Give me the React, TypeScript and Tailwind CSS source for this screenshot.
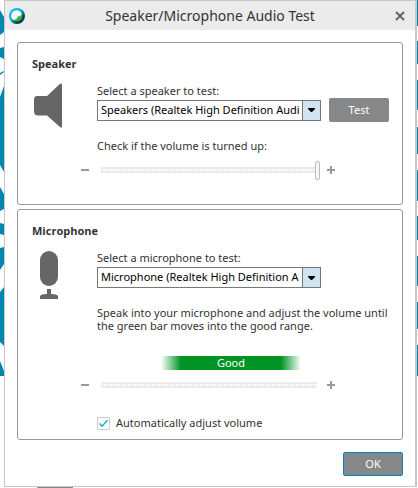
import { useState } from 'react'
import type { ReactNode } from 'react'

function Logo() {
  return (
    <svg width="16" height="16" viewBox="0 0 16 16" aria-hidden="true">
      <defs>
        <linearGradient id="ring" x1="0.1" y1="0.1" x2="0.8" y2="0.9">
          <stop offset="0.4" stopColor="#00bceb" />
          <stop offset="0.65" stopColor="#00708f" />
          <stop offset="0.8" stopColor="#07405f" />
        </linearGradient>
      </defs>
      <circle cx="8" cy="8" r="8" fill="url(#ring)" />
      <circle cx="7.8" cy="7.8" r="5.6" fill="#2fb344" />
      <path d="M12.8 5.4A5.6 5.6 0 1 0 3.8 11.8C6.6 12 8.2 10.6 8.8 8.4C10.4 8.4 12.4 7.4 12.8 5.4Z" fill="#fff" />
    </svg>
  )
}

function SpeakerIcon() {
  return (
    <svg width="30" height="45" viewBox="0 0 30 45" className="fill-[#666666]" aria-hidden="true">
      <path d="M5 13H15L27.5 1.2Q29.5 0 30 1V44Q29.5 45 28 44L15 32.5H6Q2 32.5 2 28V17Q2 13 5 13Z" />
    </svg>
  )
}

function MicIcon() {
  return (
    <svg width="30" height="49" viewBox="0 0 30 49" className="fill-[#666666]" aria-hidden="true">
      <rect x="8" y="1" width="18" height="35" rx="9" />
      <path d="M15 39H19V44Q25 44 26 46V49H8V46Q9 44 15 44Z" />
    </svg>
  )
}

function Backdrop({ side }: { side: 'left' | 'right' }) {
  if (side === 'left') {
    return (
      <svg width="4" height="376" viewBox="0 0 4 376" className="fill-[#0087b0]" aria-hidden="true">
        <path d="M0 10L4 17V32L0 35ZM0 48L4 47V59L0 57ZM0 73L4 71V72L0 75ZM0 97L4 86V172L0 165ZM0 187L4 194V209L0 211ZM0 223L4 224V235L0 234ZM0 248L4 247V264L0 270ZM0 292L4 287V346L0 342ZM0 361L4 371V376H0Z" />
      </svg>
    )
  }
  return (
    <svg width="1" height="376" viewBox="0 0 1 376" className="fill-[#0087b0]" aria-hidden="true">
      <path d="M0 0H1V26H0ZM0 41H1V64H0ZM0 80H1V110H0ZM0 127H1V154H0ZM0 170H1V201H0ZM0 216H1V240H0ZM0 256H1V286H0ZM0 302H1V329H0ZM0 345H1V376H0Z" />
    </svg>
  )
}

function Panel({ title, icon, children }: { title: string; icon: ReactNode; children: ReactNode }) {
  return (
    <section className="rounded-[3px] border border-[#999999] pt-3.5 pr-1.5 pl-3.5">
      <h2 className="font-['Open_Sans',sans-serif] text-[11px] leading-[14px] font-bold">{title}</h2>
      <div className="mt-3 flex">
        <div className="w-[65px] shrink-0">{icon}</div>
        <div className="min-w-0 flex-1">{children}</div>
      </div>
    </section>
  )
}

function DeviceSelect({ id, device }: { id: string; device: string }) {
  return (
    <div className="relative h-[21px] w-56 shrink-0">
      <select
        id={id}
        className="block h-full w-full appearance-none border border-[#777777] bg-white pr-[18px] pl-[3px] text-[11px] text-black outline-none"
      >
        <option>{device}</option>
      </select>
      <span className="pointer-events-none absolute inset-y-0 right-0 flex w-[19px] items-center justify-center border border-[#777777] bg-[#d0e3f1]">
        <svg width="7" height="4" viewBox="0 0 7 4" aria-hidden="true">
          <path d="M0 0H7V1L4 4H3L0 1Z" />
        </svg>
      </span>
    </div>
  )
}

const rangeClass =
  'block h-5 appearance-none bg-transparent outline-none ' +
  '[&::-webkit-slider-runnable-track]:h-1.5 [&::-webkit-slider-runnable-track]:border-2 [&::-webkit-slider-runnable-track]:border-r-0 [&::-webkit-slider-runnable-track]:border-[#ebebeb] ' +
  '[&::-webkit-slider-runnable-track]:bg-[repeating-linear-gradient(90deg,#f8f8f8_0_5px,#ebebeb_5px_6px)] ' +
  '[&::-webkit-slider-thumb]:-mt-2 [&::-webkit-slider-thumb]:h-[19px] [&::-webkit-slider-thumb]:w-[5px] [&::-webkit-slider-thumb]:appearance-none [&::-webkit-slider-thumb]:rounded-[2px] [&::-webkit-slider-thumb]:border [&::-webkit-slider-thumb]:border-[#bbbbbb] [&::-webkit-slider-thumb]:bg-[#f6f6f6]'

function VolumeSlider({ label, value, onChange, thumb }: { label: string; value: number; onChange: (v: number) => void; thumb: boolean }) {
  return (
    <div className="-ml-4 flex h-5 items-center">
      <button type="button" aria-label="Decrease" className="mr-3" onClick={() => onChange(Math.max(0, value - 10))}>
        <svg width="8" height="8" viewBox="0 0 8 8" className="block fill-[#999999]" aria-hidden="true">
          <path d="M0 3H8V5H0Z" />
        </svg>
      </button>
      <div className="w-[219px]">
        <input
          type="range"
          aria-label={label}
          min={0}
          max={100}
          value={value}
          onChange={(e) => onChange(Number(e.target.value))}
          className={`${rangeClass} ${thumb ? 'w-[219px]' : 'w-[216px] [&::-webkit-slider-thumb]:invisible'}`}
        />
      </div>
      <button type="button" aria-label="Increase" className="ml-[7px]" onClick={() => onChange(Math.min(100, value + 10))}>
        <svg width="8" height="8" viewBox="0 0 8 8" className="block fill-[#999999]" aria-hidden="true">
          <path d="M0 3H3V0H5V3H8V5H5V8H3V5H0Z" />
        </svg>
      </button>
    </div>
  )
}

export default function App() {
  const [speakerVolume, setSpeakerVolume] = useState(100)
  const [micVolume, setMicVolume] = useState(0)
  const [auto, setAuto] = useState(true)

  return (
    <div className="bg-white font-['Noto_Sans',sans-serif] text-[11px] text-[#333333]">
      <div className="flex items-start">
        <Backdrop side="left" />
        <main className="min-w-0 flex-1 border border-r-2 border-[#c8c8c8] bg-white">
          <header className="flex h-[29px] items-center bg-[#ebebeb] pr-2.5 pl-1">
            <Logo />
            <h1 className="flex-1 text-center text-[14px] leading-5">Speaker/Microphone Audio Test</h1>
            <button type="button" aria-label="Close">
              <svg width="10" height="10" viewBox="0 0 10 10" className="stroke-[#666666] stroke-2" aria-hidden="true">
                <path d="M1 1L9 9M9 1L1 9" />
              </svg>
            </button>
          </header>

          <div className="flex flex-col gap-1 px-3 pt-3">
            <Panel title="Speaker" icon={<SpeakerIcon />}>
              <label htmlFor="speaker" className="block leading-[15px]">Select a speaker to test:</label>
              <div className="flex items-center gap-2">
                <DeviceSelect id="speaker" device="Speakers (Realtek High Definition Audi" />
                <button type="button" className="h-6 w-[60px] rounded-[2px] bg-[#868789] text-white">Test</button>
              </div>
              <p className="mt-4 mb-1.5 leading-4">Check if the volume is turned up:</p>
              <VolumeSlider label="Speaker volume" value={speakerVolume} onChange={setSpeakerVolume} thumb />
              <div className="h-6" />
            </Panel>

            <Panel title="Microphone" icon={<MicIcon />}>
              <label htmlFor="microphone" className="mb-0.5 block leading-[15px]">Select a microphone to test:</label>
              <DeviceSelect id="microphone" device="Microphone (Realtek High Definition A" />
              <p className="mt-[18px] leading-[13px]">
                Speak into your microphone and adjust the volume until the green bar moves into the good range.
              </p>
              <div className="mt-6 mb-[5px] ml-16 h-3.5 w-[140px] bg-[linear-gradient(90deg,transparent,#009424_20px,#009424_120px,transparent)] text-center leading-[14px] text-white">
                Good
              </div>
              <VolumeSlider label="Microphone volume" value={micVolume} onChange={setMicVolume} thumb={false} />
              <label className="mt-5 mb-2 flex h-4 items-center gap-1.5 leading-4">
                <span className="relative size-[13px]">
                  <input
                    type="checkbox"
                    checked={auto}
                    onChange={(e) => setAuto(e.target.checked)}
                    className="block size-[13px] appearance-none rounded-[1px] border border-[#cccccc] bg-white"
                  />
                  {auto && (
                    <svg viewBox="0 0 13 13" className="pointer-events-none absolute inset-0 fill-none stroke-[#00a9d8] stroke-[1.3]" aria-hidden="true">
                      <path d="M2.5 6.5L5 9.2L10.5 3.2" />
                    </svg>
                  )}
                </span>
                Automatically adjust volume
              </label>
            </Panel>
          </div>

          <footer className="flex justify-end px-3 pt-3 pb-2.5">
            <button type="button" className="h-6 w-[60px] rounded-[2px] border border-[#0087b0] bg-[#868789] text-white">OK</button>
          </footer>
        </main>
        <Backdrop side="right" />
      </div>
      <div className="ml-[37px] h-px w-9 bg-[#888888]" />
    </div>
  )
}
